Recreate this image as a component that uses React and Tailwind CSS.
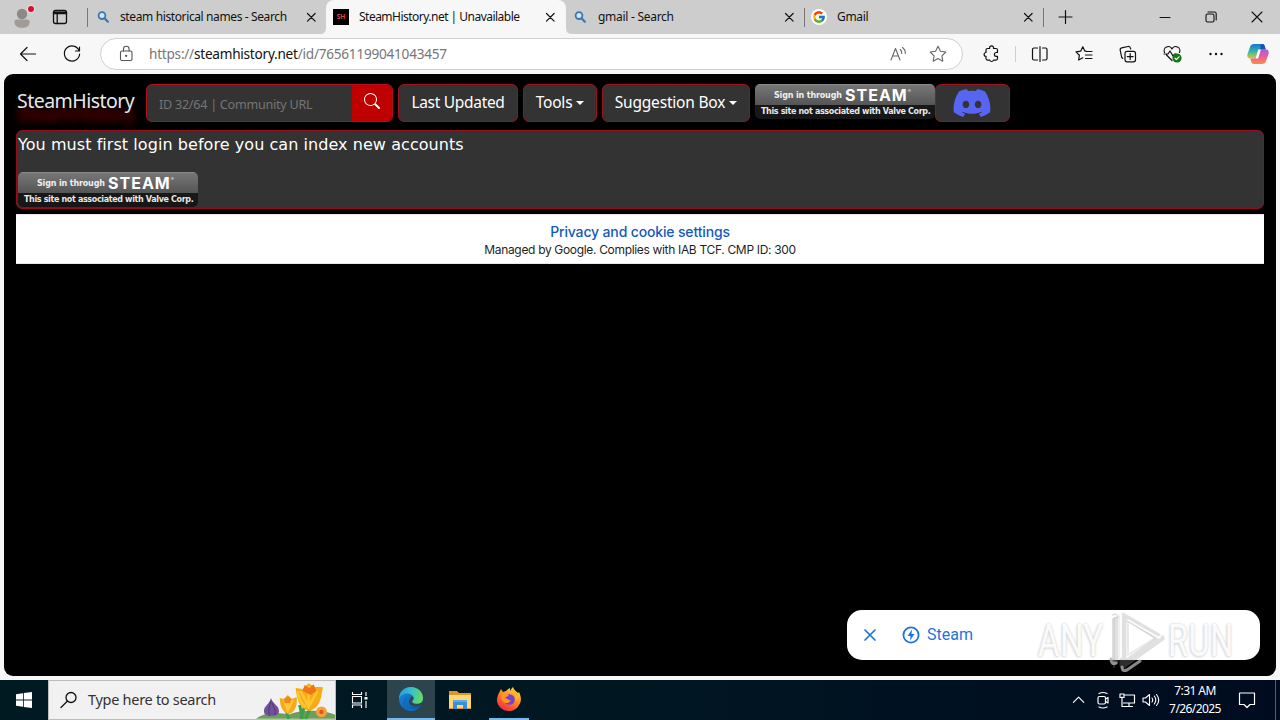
import { BsSearch } from "react-icons/bs";
import { FaDiscord } from "react-icons/fa";
import { FcGoogle } from "react-icons/fc";

const Line = ({ children, className = "", size = 20, width = 1.2 }) => (
  <svg
    width={size}
    height={size}
    viewBox="0 0 20 20"
    fill="none"
    stroke="currentColor"
    strokeWidth={width}
    strokeLinecap="round"
    strokeLinejoin="round"
    className={`block shrink-0 ${className}`}
  >
    {children}
  </svg>
);

const CloseIcon = ({ size = 20, className = "" }) => (
  <Line size={size} className={className}>
    <path d="M6.5 6.5l7.600 7.600M14.100 6.500L6.500 14.100" />
  </Line>
);

const BlueSearch = () => (
  <svg width="14" height="14" viewBox="0 0 14 14" fill="none" className="block shrink-0">
    <circle cx="6" cy="5.6" r="3.4" fill="#d8e6f2" stroke="#3879b5" strokeWidth="1.8" />
    <path d="M8.5 8.3l3.4 3.4" stroke="#3879b5" strokeWidth="2.2" strokeLinecap="round" />
  </svg>
);

const Divider = () => <div className="h-[19px] w-px shrink-0 bg-[#777]" />;

const TabBar = () => (
  <div className="flex h-[34px] items-center bg-[#cdcdcd] text-[12px] text-[#111]">
    <div className="flex w-[87px] items-center">
      <svg width="34" height="34" viewBox="0 0 34 34" className="ml-[6px] block">
        <circle cx="16" cy="14" r="5.2" fill="#8d8985" />
        <path d="M8.4 22c0-2 1.3-2.6 3-2.6h9.3c1.8 0 3 .8 3 2.6 0 3.6-3 5.8-7.6 5.8S8.400 25.600 8.400 22z" fill="#a09b96" />
        <circle cx="25" cy="9" r="4.300" fill="#e6dcdc" />
        <circle cx="25" cy="9" r="3" fill="#d3102f" />
      </svg>
      <Line className="ml-[10px]" width={1.3}>
        <rect x="3.500" y="3.500" width="13" height="13" rx="2" />
        <path d="M3.500 5.200h13M3.500 6.500h13M7.200 7v9.500" />
      </Line>
    </div>
    <Divider />
    <div className="flex h-full w-[238px] items-center">
      <div className="ml-[8px]"><BlueSearch /></div>
      <span className="ml-[10px] w-[181px] tracking-[-0.38px] whitespace-nowrap">steam historical names - Search</span>
      <CloseIcon />
    </div>
    <div className="relative flex h-full w-[240px] items-center rounded-t-[8px] bg-[#f7f7f7]">
      <svg width="6" height="6" viewBox="0 0 6 6" className="absolute bottom-0 -left-[6px]">
        <path d="M6 0v6H0Q6 6 6 0z" fill="#f7f7f7" />
      </svg>
      <svg width="6" height="6" viewBox="0 0 6 6" className="absolute -right-[6px] bottom-0">
        <path d="M0 0v6h6Q0 6 0 0z" fill="#f7f7f7" />
      </svg>
      <div className="ml-[7px] flex h-4 w-4 items-center justify-center bg-black text-[6.500px] font-bold text-[#d94a4a]">SH</div>
      <span className="ml-[10px] w-[181px] tracking-[-0.52px] whitespace-nowrap">SteamHistory.net | Unavailable</span>
      <CloseIcon />
    </div>
    <div className="flex h-full w-[238px] items-center">
      <div className="ml-[7px]"><BlueSearch /></div>
      <span className="ml-[11px] w-[181px] tracking-[-0.28px] whitespace-nowrap">gmail - Search</span>
      <CloseIcon />
    </div>
    <Divider />
    <div className="flex h-full w-[238px] items-center">
      <div className="ml-[6px] flex h-4 w-4 items-center justify-center rounded-full bg-white">
        <FcGoogle size={14} />
      </div>
      <span className="ml-[10px] w-[181px] tracking-[-0.35px] whitespace-nowrap">Gmail</span>
      <CloseIcon />
    </div>
    <Divider />
    <Line className="ml-[11px]" width={1.2}>
      <path d="M4 10h13M10.500 3.500v13" />
    </Line>
    <div className="ml-auto flex items-center gap-[26px] pr-[13px]">
      <Line width={1}><path d="M5 10.500h10" /></Line>
      <Line width={1.1}>
        <rect x="5" y="7" width="8" height="8" rx="1.500" />
        <path d="M7 5h6.500a1.700 1.700 0 0 1 1.700 1.700V13" />
      </Line>
      <Line width={1.1}><path d="M5 5l10 10M15 5L5 15" /></Line>
    </div>
  </div>
);

const CopilotIcon = () => (
  <svg width="24" height="24" viewBox="0 0 24 24" className="block shrink-0">
    <defs>
      <linearGradient id="cpa" x1="0" y1="0" x2="0" y2="1">
        <stop offset="0" stopColor="#1677d2" />
        <stop offset=".5" stopColor="#2fb6b0" />
        <stop offset="1" stopColor="#d9c92e" />
      </linearGradient>
      <linearGradient id="cpb" x1="0" y1="0" x2="0" y2="1">
        <stop offset="0" stopColor="#a35ce6" />
        <stop offset=".5" stopColor="#ec5f94" />
        <stop offset="1" stopColor="#fb8d45" />
      </linearGradient>
    </defs>
    <path d="M8 2h8c2 0 2.500 1 3 3l.7 2.500h-3.500c-1.700 0-2.300 1-2.700 2.400l-1.200 4.300c-.5 1.700-1.300 2.300-3 2.300H4c-2.400 0-3.200-2-2.500-4.500L4 5c.7-2.200 2-3 4-3z" fill="url(#cpa)" />
    <path d="M15 2h1c2 0 2.500 1 3 3l.7 2.500H16.200c-1.300 0-2 .5-2.400 1.500L15 2z" fill="#1b52b8" />
    <path d="M16 22H8c-2 0-2.500-1-3-3l-.7-2.500h3.500c1.700 0 2.300-1 2.700-2.400l1.200-4.300c.5-1.700 1.300-2.300 3-2.300H20c2.400 0 3.200 2 2.500 4.500L20 19c-.7 2.200-2 3-4 3z" fill="url(#cpb)" />
    <path d="M12.300 7.500h2.600l-2.700 9h-2.700z" fill="#fff" />
  </svg>
);

const Toolbar = () => (
  <div className="flex h-10 items-center bg-[#f7f7f7] text-[#111]">
    <Line className="ml-[18px]" width={1.2}>
      <path d="M2.500 10h15M9 3.500L2.500 10 9 16.500" />
    </Line>
    <Line className="ml-[24px]" width={1.2}>
      <path d="M17 6.500A7.600 7.600 0 1 0 17.600 10M17.500 3v4h-4" />
    </Line>
    <div className="ml-[18px] flex h-8 w-[863px] items-center rounded-full border border-[#d0d0d0] bg-white">
      <Line className="ml-[15px] text-[#555]" width={1.1}>
        <rect x="4.500" y="7" width="11.500" height="9.500" rx="1.500" />
        <path d="M7.500 7V5a2.800 2.800 0 0 1 5.600 0v2" />
        <circle cx="10.200" cy="11.800" r=".6" fill="currentColor" />
      </Line>
      <span className="ml-[13px] text-[13.600px] tracking-[-0.24px] whitespace-nowrap text-[#767676]">
        https://<span className="text-[#111]">steamhistory.net</span>/id/76561199041043457
      </span>
      <Line className="ml-auto text-[#666]" width={1.1}>
        <path d="M3 16L7.500 4.500 12 16M4.500 12h6M12.300 5.500q1.700 1.700 1.500 4M14.500 3.500q3.200 2.500 2.800 6" />
      </Line>
      <Line className="mr-[14px] ml-[20px] text-[#666]" width={1.1}>
        <path d="M10 2.300l2.400 4.900 5.400.8-3.900 3.800.9 5.400-4.800-2.600-4.800 2.600.9-5.400L2.200 8l5.400-.8z" />
      </Line>
    </div>
    <Line className="ml-[18px]" width={1.2}>
      <path d="M6.500 4.500h2.200a2 2 0 1 1 3.800 0h2.500a1.500 1.500 0 0 1 1.500 1.500v2.500h-1.200a1.900 1.900 0 1 0 0 3.800h1.200v2.300a1.500 1.500 0 0 1-1.500 1.500h-2.500a2 2 0 0 1-3.800 0H6.500a1.500 1.500 0 0 1-1.500-1.500v-2.300a1.900 1.900 0 1 1 0-3.800V6a1.500 1.500 0 0 1 1.500-1.500z" />
    </Line>
    <div className="ml-[14px] h-4 w-px bg-[#d0d0d0]" />
    <Line className="ml-[14px]" width={1.2}>
      <path d="M7.500 4H4a1.500 1.500 0 0 0-1.500 1.500v9A1.500 1.500 0 0 0 4 16h3.500M12.500 4H15.500a1.500 1.500 0 0 1 1.500 1.500v9A1.500 1.500 0 0 1 15.500 16h-3M10 2.500v15" />
    </Line>
    <Line className="ml-[24px]" width={1.2}>
      <path d="M12 7.200H10.900L8.800 2.800 6.700 7.200 2 7.900l3.400 3.300-.8 4.800 4.200-2.300M12.500 7.500H18M11.500 11H18M11.500 14.500H18" />
    </Line>
    <Line className="ml-[24px]" width={1.2}>
      <rect x="7" y="7.300" width="10.500" height="10.500" rx="2" />
      <path d="M12.200 9.700v5.800M9.300 12.600h5.800M4.800 14.400A2 2 0 0 1 3.600 13L2.200 6.200A2 2 0 0 1 3.700 3.900L10 2.500a2 2 0 0 1 2.400 1.500l.3 1" />
    </Line>
    <Line className="ml-[24px]" width={1.2}>
      <path d="M2.500 8.500A4 4 0 0 1 10 5a4 4 0 0 1 7.500 3.500M10 16.500L4.500 11M2 10h4l2-3 3 5 1.500-2H14" />
      <circle cx="15" cy="14" r="4.600" fill="#107c10" stroke="none" />
      <path d="M13 14.200l1.400 1.300 2.600-2.700" stroke="#fff" />
    </Line>
    <Line className="ml-[24px]">
      <g fill="currentColor" stroke="none">
        <circle cx="4.500" cy="10" r="1.200" />
        <circle cx="10" cy="10" r="1.200" />
        <circle cx="15.500" cy="10" r="1.200" />
      </g>
    </Line>
    <div className="ml-[20px]"><CopilotIcon /></div>
  </div>
);

const SteamButton = () => (
  <div className="h-[35px] w-[180px] shrink-0 overflow-hidden rounded-[5px] bg-gradient-to-b from-[#1d1d1d] to-[#161616] text-white">
    <div className="flex h-[21px] items-center border-t border-[#8a8a8a] bg-gradient-to-b from-[#777] to-[#555] pl-[19px] whitespace-nowrap">
      <span className="w-[71px] pt-px font-['DejaVu_Sans'] text-[8px] font-bold tracking-[-0.15px] text-[#f0f0f0]">Sign in through</span>
      <span className="font-['Inter'] text-[16px] leading-none font-bold tracking-[1px]">STEAM</span>
      <span className="mb-2 text-[4px]">®</span>
    </div>
    <div className="pt-px pl-[6px] font-['DejaVu_Sans'] text-[8px] leading-[12px] font-bold tracking-[-0.35px] whitespace-nowrap text-[#e8e8e8]">
      This site not associated with Valve Corp.
    </div>
  </div>
);

const Caret = () => (
  <i className="ml-1 inline-block border-x-[4.500px] border-t-[4.500px] border-x-transparent border-t-white align-[3px]" />
);

const NavButton = ({ children, className }) => (
  <div className={`flex h-[38px] shrink-0 items-center justify-center rounded-md border border-[#a00f1c] bg-[#333] text-[15.500px] whitespace-nowrap text-white ${className}`}>
    {children}
  </div>
);

const NavBar = () => (
  <div className="flex h-12 items-start">
    <div className="w-[130px] shrink-0 pl-px text-[19.500px] leading-[33px] tracking-[-0.53px] whitespace-nowrap text-[#e8e8e8] [text-shadow:0_13px_8px_#a00000]">
      SteamHistory
    </div>
    <div className="flex h-[38px] w-[247px] overflow-hidden rounded-md border border-[#b50d1a] bg-[#333]">
      <div className="w-[205px] pl-3 text-[12.600px] leading-[39px] tracking-[-0.26px] whitespace-nowrap text-[#757575]">ID 32/64 | Community URL</div>
      <div className="flex flex-1 justify-center bg-[#bf0000] pt-[8px] text-white">
        <BsSearch size={16} />
      </div>
    </div>
    <NavButton className="ml-[5px] w-[120px] tracking-[-0.3px]">Last Updated</NavButton>
    <NavButton className="ml-[5px] w-[74px] tracking-[-0.2px]"><span>Tools<Caret /></span></NavButton>
    <NavButton className="mr-[5px] ml-[5px] w-[148px] tracking-[-0.2px]"><span>Suggestion Box<Caret /></span></NavButton>
    <SteamButton />
    <NavButton className="w-[75px]"><FaDiscord size={40} color="#5865f2" className="-ml-px" /></NavButton>
  </div>
);

const Watermark = () => (
  <div className="pointer-events-none absolute top-[609px] left-[1038px] flex h-[64px] w-[200px] items-center">
    <span className="w-[68px] origin-left scale-x-[0.75] font-['Roboto'] text-[44px] leading-none tracking-[0.5px] text-white/90 [text-shadow:0_0_3px_#ccc,-1px_1px_3px_#ddd]">ANY</span>
    <svg width="60" height="64" viewBox="0 0 60 64" fill="none" className="shrink-0" strokeLinecap="round" strokeLinejoin="round">
      <path d="M17 6v50L55 29z" stroke="#999" strokeOpacity=".3" strokeWidth="7" />
      <path d="M9 8v44" stroke="#999" strokeOpacity=".3" strokeWidth="7" />
      <path d="M8 58V11q0-3 4-3M22 12v34l27-17z" stroke="#aaa" strokeOpacity=".25" strokeWidth="2" />
      <path d="M5 50V10q1-3 5-3M15 48V5q0-3 3-2l38 22-3 4-31-18" stroke="#fff" strokeOpacity=".9" strokeWidth="2" />
      <path d="M5 50q0 6 5 4M16 58q0 5 5 3l13-9" stroke="#aaa" strokeOpacity=".8" strokeWidth="3" />
    </svg>
    <span className="ml-[2px] origin-left scale-x-[0.74] font-['Roboto'] text-[44px] leading-none tracking-[0.5px] text-white/90 [text-shadow:0_0_3px_#ccc,-1px_1px_3px_#ddd]">RUN</span>
  </div>
);

const Page = () => (
  <div className="mx-1 h-[602px] rounded-[9px] bg-black px-3 pt-[10px]">
    <NavBar />
    <div className="-mt-[2px] h-[79px] rounded-md border border-[#960d18] bg-[#333] px-px pt-px">
      <p className="h-10 font-['DejaVu_Sans'] text-[16px] leading-[25px] tracking-[0.06px] text-white">
        You must first login before you can index new accounts
      </p>
      <SteamButton />
    </div>
    <div className="mt-[5px] h-[50px] border-y border-[#e8e8e8] bg-white pt-[7px] text-center font-['Inter']">
      <p className="text-[14px] leading-5 font-medium tracking-[-0.15px] text-[#1558c0]">Privacy and cookie settings</p>
      <p className="text-[12px] leading-[16px] tracking-[-0.33px] text-[#1f1f1f]">Managed by Google. Complies with IAB TCF. CMP ID: 300</p>
    </div>
    <div className="absolute top-[610px] left-[847px] flex h-[50px] w-[413px] items-center rounded-[15px] bg-white text-[#1f73e0]">
      <Line className="ml-[13px]" width={1.7}>
        <path d="M5 5l10 10M15 5L5 15" />
      </Line>
      <Line className="ml-[21px]" width={1.800}>
        <circle cx="10" cy="10" r="7.600" />
        <path d="M11 4.500L6.500 11h3L9 15.500 13.500 9h-3z" fill="currentColor" stroke="none" />
      </Line>
      <span className="ml-[6px] font-['Roboto'] text-[16px]">Steam</span>
    </div>
    <Watermark />
  </div>
);

const Flowers = () => (
  <svg width="80" height="38" viewBox="0 0 80 38" className="block">
    <path d="M0 38c8-7 24-7 33-4 12-6 36-5 47 0v4z" fill="#6f9d5c" />
    <path d="M28 22l5 16M50 22l-5 16M44 24l3 14M56 24l-6 14" stroke="#3f9e49" strokeWidth="3" />
    <path d="M15 17c-1 6-7 8-7 13 0 4 3 5 8 5s8-2 7-6c0-4-6-6-8-12z" fill="#71509c" />
    <path d="M15 20c-2 6-3 12-1 15M16 22c3 6 4 9 3 12" stroke="#513675" fill="none" />
    <path d="M24 17l4 1 4-4 4 4 5-2c1 9-2 16-8 17-6-1-9-8-9-16z" fill="#f5a91c" />
    <path d="M28 19l4 11 5-11M32 16v14" stroke="#ffc93a" strokeWidth="2" fill="none" />
    <path d="M28 19l4-4 4 3-2 4h-5z" fill="#ed8a1d" />
    <path d="M40 7l7 1 6-6 6 4 8 0c1 3-1 5-1 9-2 8-5 13-12 15-10-2-13-11-14-23z" fill="#f8ab13" />
    <path d="M45 10l8 16 9-16M53 5v20M42 10c1 8 4 13 8 16" stroke="#ffc833" strokeWidth="2.500" fill="none" />
    <path d="M47 10l2-6 5 3 4-4 3 7-6 4z" fill="#ed761d" />
    <circle cx="66" cy="31" r="5.500" fill="#f5a13b" />
    <circle cx="66" cy="31" r="2.200" fill="#d95a17" />
  </svg>
);

const EdgeIcon = () => (
  <svg width="26" height="26" viewBox="0 0 26 26">
    <defs>
      <linearGradient id="edA" x1="0" y1=".3" x2="1" y2=".5">
        <stop offset="0" stopColor="#2b9be5" />
        <stop offset=".5" stopColor="#35c1c8" />
        <stop offset="1" stopColor="#6bdc5b" />
      </linearGradient>
      <linearGradient id="edB" x1="0" y1="0" x2="1" y2="1">
        <stop offset="0" stopColor="#1a8fe0" />
        <stop offset="1" stopColor="#0b4f9e" />
      </linearGradient>
    </defs>
    <circle cx="13" cy="13" r="12" fill="url(#edB)" />
    <path d="M1 13C1 6 6 1 13 1s12 5 12 11c0 4-3 6-6.500 6-3 0-4.500-1-4.500-2.300 0-1 1.500-1.500 1.500-3.700C15.500 9 12 7.500 9 7.500 5 7.500 2 10 1 13z" fill="url(#edA)" />
    <path d="M15.300 13.500c-1 .8-1.500 2-.8 3 1 1.500 5 2 9 .2l1 1.300c-2 1.500-4 2.500-7 2.500-4.500 0-7-2.500-6.500-6 .3-2 2-4 3.500-4 1.200.4 1.500 2 .8 3z" fill="#2c4850" />
    <path d="M10 10c-3 3-3 9 1 12 3 2 7 1 10-.5-2 2.300-5 3.500-8 3.500-5 0-8-4-8-8 0-3 2-6 5-7z" fill="#136bbf" />
  </svg>
);

const FolderIcon = () => (
  <svg width="24" height="22" viewBox="0 0 24 22">
    <path d="M1 2h8l2 2h12v16H1z" fill="#d99a2b" />
    <path d="M1 6h22v13H1z" fill="#ffd773" />
    <path d="M5 20v-8h14v8h-4v-4H9v4z" fill="#3a8fd6" />
    <path d="M5 11h14v2H5z" fill="#5aaced" />
  </svg>
);

const FirefoxIcon = () => (
  <svg width="26" height="26" viewBox="0 0 26 26">
    <defs>
      <linearGradient id="ff" x1=".8" y1="0" x2=".2" y2="1">
        <stop offset="0" stopColor="#ffe14a" />
        <stop offset=".45" stopColor="#ff8b22" />
        <stop offset="1" stopColor="#ed234b" />
      </linearGradient>
    </defs>
    <path d="M3 7l2-4 2 3 3-1c1-1 2-2 4-3v3c1-2 2-3 3-4 1 3 3 4 5 6l1-1c2 4 3 9 0 13-2 4-6 6-10 6C6 25 1 20 1 14c0-3 1-5 2-7z" fill="url(#ff)" />
    <circle cx="13.500" cy="13.500" r="5.300" fill="#7640d8" />
    <path d="M6 8c3-1 5 0 7 2-2 0-3 1-4 2 2 0 3 3 6 2-2 4-7 4-9 0-1-2-1-4 0-6z" fill="#ff9623" />
    <path d="M15 6c4 1 6 5 4 9 3-1 4-4 3-7-2-1-4-3-5-5z" fill="#ffb728" />
  </svg>
);

const Taskbar = () => (
  <div className="flex h-10 items-stretch bg-gradient-to-r from-[#001a22] via-[#001722] to-[#000b20] text-white">
    <div className="flex w-12 items-center justify-center">
      <svg width="16" height="16" viewBox="0 0 16 16" fill="#fff">
        <path d="M0 2.200l7-1v6.400H0zM7.800 1.100L16 0v7.600H7.800zM0 8.400h7v6.400l-7-1zM7.800 8.400H16V16l-8.200-1.100z" />
      </svg>
    </div>
    <div className="flex h-10 w-[288px] items-center border border-[#bcbcbc] bg-[#f1f1f1] text-[#333]">
      <Line className="ml-[10px] text-[#111]" width={1.300}>
        <circle cx="12" cy="7.500" r="5" />
        <path d="M8.500 11L2 17.500" />
      </Line>
      <span className="ml-[9px] w-[169px] text-[14.500px] tracking-[-0.29px] whitespace-nowrap">Type here to search</span>
      <Flowers />
    </div>
    <div className="flex w-[51px] items-center justify-center pr-[3px]">
      <svg width="18" height="18" viewBox="0 0 18 18" fill="none" stroke="#fff" strokeWidth="1.100">
        <path d="M1.500 1v2.500h9V1M1.500 5.500h9v6.500h-9zM1.500 17v-3h9v3M15 1v4M15 10v7" />
        <path d="M13.500 6h3v2.500h-3z" fill="#fff" stroke="none" />
      </svg>
    </div>
    <div className="flex w-12 items-center justify-center border-b-2 border-[#76b9ed] bg-[#2d444c]"><EdgeIcon /></div>
    <div className="flex w-[50px] items-center justify-center"><FolderIcon /></div>
    <div className="mx-1 flex w-10 items-center justify-center border-b-2 border-[#76b9ed]"><FirefoxIcon /></div>
    <div className="ml-auto flex items-center">
      <Line size={16} width={1.400}><path d="M1.500 12L8 5.500l6.500 6.500" transform="translate(1.500 1)" /></Line>
      <Line className="ml-[6px]" width={1.200}>
        <rect x="5" y="6.500" width="7.500" height="7.500" rx="1.500" />
        <path d="M12.500 9l2.500-1.500v5.500l-2.500-1.500M6 3.500q4-2 8 0M6 17q4 2 8 0" />
      </Line>
      <Line className="ml-[4px]" width={1.200}>
        <path d="M8 5h9.500v8H6.500M5 10V7M12 13v3.500M8.500 16.500h7M3 4h4v3.500H3zM5 7.500v9h3" />
      </Line>
      <Line className="ml-[4px]" width={1.100}>
        <path d="M2 8v4h2.500L8.500 15.500v-11L4.500 8zM11 8q1.500 2 0 4M13.300 6q3 4 0 8M15.500 4.500q4.500 5.500 0 11" />
      </Line>
      <div className="ml-[2px] w-[64px] text-center text-[12px] leading-[18px] tracking-[-0.58px] whitespace-nowrap">
        7:31 AM<br />7/26/2025
      </div>
      <Line className="mr-[18px] ml-[10px]" width={1.200}>
        <path d="M2.500 3h15v11.500H13L10 17.500 7 14.500H2.500z" />
      </Line>
      <div className="h-10 w-px bg-[#56606c]" />
      <div className="w-[4px]" />
    </div>
  </div>
);

const App = () => {
  return (
    <div className="relative h-[720px] w-[1280px] overflow-hidden bg-[#f7f7f7] font-['Noto_Sans','Open_Sans',sans-serif]">
      <TabBar />
      <Toolbar />
      <Page />
      <div className="h-1" />
      <Taskbar />
    </div>
  );
};

export default App;
